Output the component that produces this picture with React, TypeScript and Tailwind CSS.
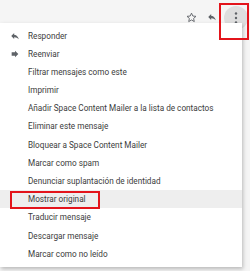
import { FC } from "react";

const items = [
    "Responder",
    "Reenviar",
    "Filtrar mensajes como este",
    "Imprimir",
    "Añadir Space Content Mailer a la lista de contactos",
    "Eliminar este mensaje",
    "Bloquear a Space Content Mailer",
    "Marcar como spam",
    "Denunciar suplantación de identidad",
    "Mostrar original",
    "Traducir mensaje",
    "Descargar mensaje",
    "Marcar como no leído",
];

const ReplyIcon = () => (
    <svg width="10" height="10" viewBox="0 0 24 24" fill="#5f6368">
        <path d="M10 9V5l-7 7 7 7v-4.1c5 0 8.5 1.6 11 5.1-1-5-4-10-11-11z" />
    </svg>
);

const ForwardIcon = () => (
    <svg width="10" height="10" viewBox="0 0 24 24" fill="#5f6368">
        <path d="M12 8V4l8 8-8 8v-4H4V8z" />
    </svg>
);

const App: FC = () => {
    return (
        <div className="relative w-[250px] h-[271px] bg-[#f5f5f5] overflow-hidden" style={{ fontFamily: "Roboto, 'Liberation Sans', sans-serif" }}>
            <div className="h-[23px] flex justify-end items-start pr-[2px]">
                <div className="mt-[12px] mr-[10px]">
                    <svg width="11" height="11" viewBox="0 0 24 24" fill="none" stroke="#5f6368" strokeWidth="2" strokeLinejoin="round">
                        <path d="M12 2.5l2.9 6.3 6.9.7-5.2 4.6 1.5 6.8L12 17.4l-6.1 3.5 1.5-6.8-5.2-4.6 6.9-.7z" />
                    </svg>
                </div>
                <div className="mt-[12px] mr-[7px]">
                    <ReplyIcon />
                </div>
                <div className="mt-[6px] w-[24px] h-[24px] rounded-full bg-[#dedede] flex items-center justify-center shrink-0">
                    <svg width="4" height="12" viewBox="0 0 4 12" fill="#5f6368">
                        <circle cx="2" cy="1.5" r="1.2" />
                        <circle cx="2" cy="6" r="1.2" />
                        <circle cx="2" cy="10.5" r="1.2" />
                    </svg>
                </div>
            </div>

            <div className="relative z-10 w-[242px] h-[244px] bg-white shadow-[1px_2px_4px_rgba(0,0,0,0.25)] pt-[3.6px]">
                {items.map((label, key) =>
                    <div key={key} className={`h-[18.2px] flex items-center text-[8.2px] text-[#3c3c3c] whitespace-nowrap ${label === "Mostrar original" ? "bg-[#eeeeee]" : ""}`}>
                        <span className="w-[28px] pl-[10px] flex items-center">
                            {key === 0 && <ReplyIcon />}
                            {key === 1 && <ForwardIcon />}
                        </span>
                        <span>{label}</span>
                    </div>)}
            </div>

            <div className="absolute z-20 left-[219px] top-[3px] w-[30px] h-[37px] border-2 border-[#e3141b]" />
            <div className="absolute z-20 left-[10px] top-[191px] w-[90px] h-[18px] border-2 border-[#e3141b]" />
        </div>
    )
}

export default App;
